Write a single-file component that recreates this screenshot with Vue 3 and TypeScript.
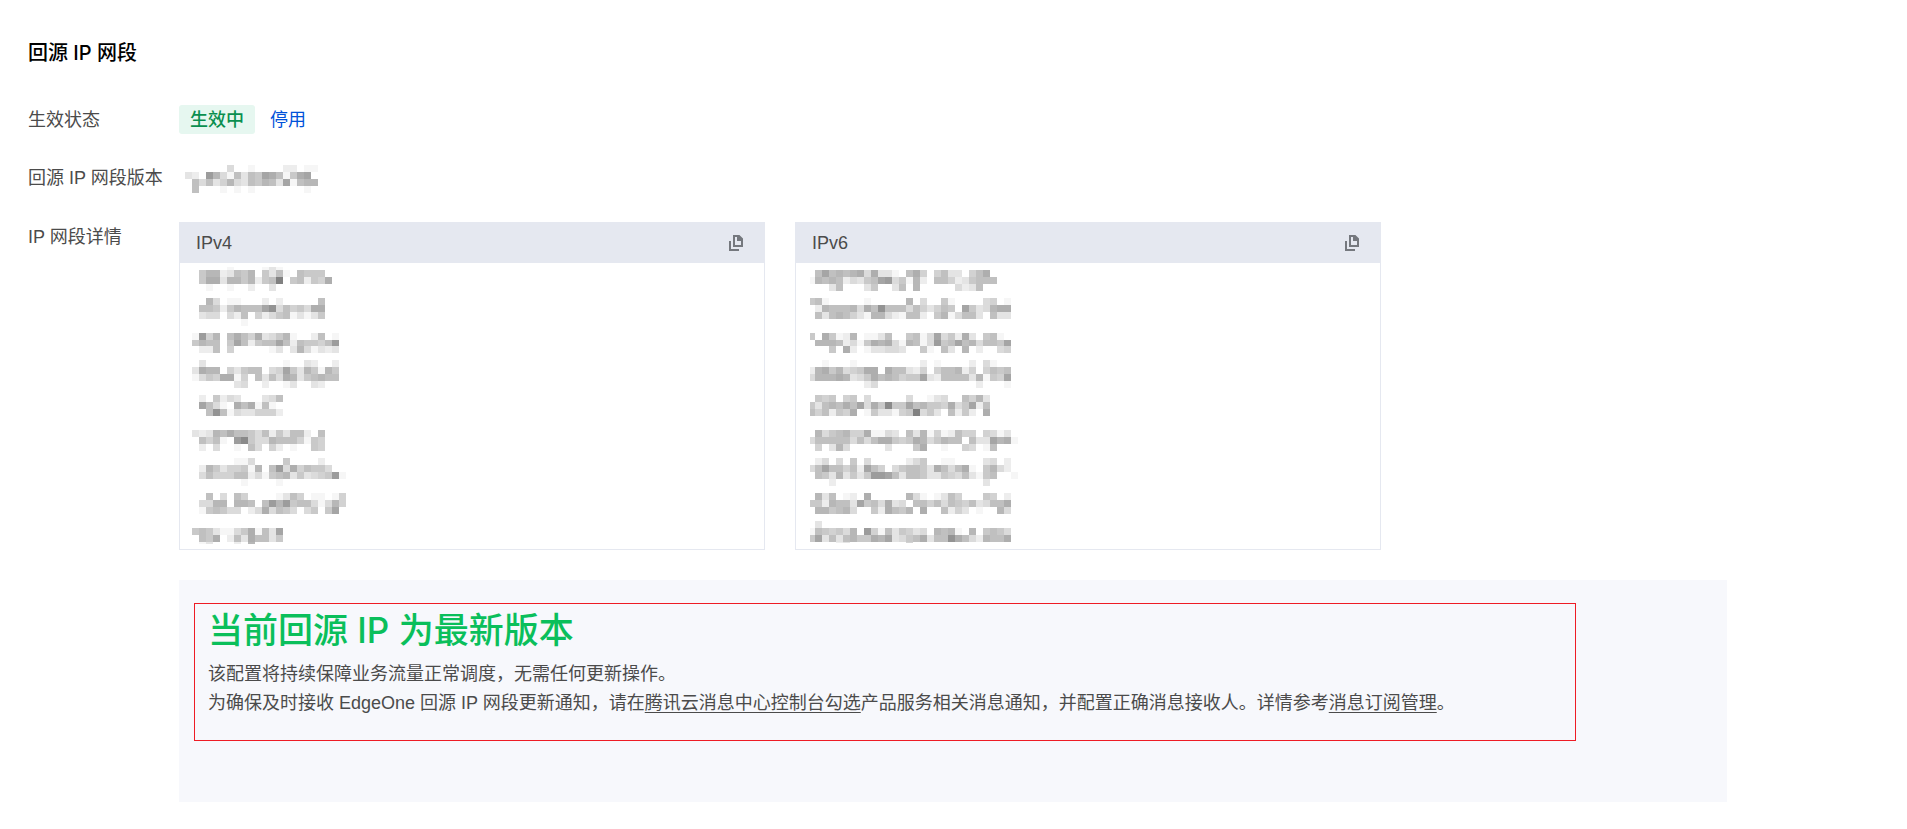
<script setup lang="ts">
interface MosaicRow {
  y: number
  h?: number
  cells: string
}
interface Block {
  x: number
  y: number
  h: number
  fill: string
}

const CELL = 7

/* Each character is one cell: 0 is empty, f is the darkest grey. */
function toBlocks(rows: MosaicRow[]): Block[] {
  return rows.flatMap((row) =>
    [...row.cells].flatMap((c, i) => {
      const level = parseInt(c, 16)
      if (!level) return []
      const g = 255 - level * 9
      return [{ x: i * CELL, y: row.y, h: row.h ?? CELL, fill: `rgb(${g},${g},${g})` }]
    })
  )
}

const version = toBlocks([
  { y: 0, cells: '0000004001000022011' },
  { y: 7, cells: '320b8417376a97169a0' },
  { y: 14, cells: '07473584376873a1788' },
  { y: 21, cells: '0700010101000000010' }
])

const ipv4 = toBlocks([
  { y: 3, h: 3, cells: '0000010000131' },
  { y: 6, cells: '06882376806371076660' },
  { y: 13, cells: '069938868267e0672659' },
  { y: 20, cells: '001001002003' },
  { y: 34, cells: '0084011000202000007' },
  { y: 41, cells: '0776268777ac4756499' },
  { y: 48, cells: '0344042705246713136' },
  { y: 55, cells: '00000001' },
  { y: 69, cells: '1b5807975934681002701' },
  { y: 76, h: 6, cells: '687706a72677a7276657b' },
  { y: 82, cells: '022705000001303841323' },
  { y: 96, cells: '030000000000010032002' },
  { y: 103, cells: '3988053677045a6386186' },
  { y: 110, cells: '146599150737498367877' },
  { y: 117, cells: '0000003400200130032' },
  { y: 131, cells: '0206243000347' },
  { y: 138, cells: '0a7410979171' },
  { y: 145, cells: '007c714335552' },
  { y: 166, cells: '3238797764726377207' },
  { y: 173, cells: '075710bd64487775165' },
  { y: 180, cells: '0204001074052010065' },
  { y: 194, cells: '0000001140000600002' },
  { y: 201, cells: '028635561807b4957664' },
  { y: 208, cells: '04755577241678363456b1' },
  { y: 215, cells: '0000000100001' },
  { y: 229, cells: '0070407500001375011015' },
  { y: 236, cells: '04488088707b8b67741485' },
  { y: 243, cells: '01676440249476404606a' },
  { y: 264, cells: '676311469173a' },
  { y: 271, cells: '0769027397736' },
  { y: 278, h: 2, cells: '013000208' }
])

const ipv6 = toBlocks([
  { y: 6, cells: '07a78789493310795057330579' },
  { y: 13, cells: '1878724367ab461820775236777' },
  { y: 20, cells: '0003700036003708000004237' },
  { y: 34, cells: '67100000100000804006100004501' },
  { y: 41, cells: '0287778497c77747535760a634899' },
  { y: 48, cells: '07378753188421772068147730733' },
  { y: 69, cells: '609612801137006714a4629306710' },
  { y: 76, h: 6, cells: '088872416989418714b67a784776a' },
  { y: 82, cells: '00060920133443006107308020045' },
  { y: 96, cells: '001000100000000020100002041' },
  { y: 103, cells: '28968456990977325057782505767' },
  { y: 110, cells: '4888983469787566a32777738165a' },
  { y: 117, cells: '00000000240000000000000020001' },
  { y: 131, cells: '06560560400000400134007583' },
  { y: 138, cells: '6378797a496d66a78665946a27' },
  { y: 145, cells: '757265901633156e4630726209' },
  { y: 166, cells: '08467855911430738151275505413' },
  { y: 173, cells: '47777747479965698468770733a891' },
  { y: 180, cells: '05038400000300069001005401700' },
  { y: 194, cells: '02404060400000246001100003402' },
  { y: 201, cells: '47a77572a75046776397479106842' },
  { y: 208, cells: '076383636bba737763365473167001' },
  { y: 215, cells: '0002000000000000000000000300' },
  { y: 229, cells: '08370120900000841013750006502' },
  { y: 236, cells: '6628773a674934077574765734779' },
  { y: 243, cells: '08867840062976809007253010084' },
  { y: 257, cells: '03' },
  { y: 264, cells: '17656480b51736534087810806764' },
  { y: 271, cells: '6a373786698a34679377c97428779' },
  { y: 278, h: 1, cells: '000023000000005' }
])

const panels = [
  { name: 'IPv4', blocks: ipv4, clip: 0 },
  { name: 'IPv6', blocks: ipv6, clip: 2 }
]
</script>

<template>
  <main class="page">
    <h1 class="title">回源 IP 网段</h1>

    <dl class="form">
      <dt>生效状态</dt>
      <dd class="status">
        <span class="tag">生效中</span>
        <button type="button" class="link-btn">停用</button>
      </dd>

      <dt>回源 IP 网段版本</dt>
      <dd class="version">
        <svg width="133" height="28" viewBox="0 0 133 28" shape-rendering="crispEdges" aria-hidden="true">
          <rect v-for="(b, i) in version" :key="i" :x="b.x" :y="b.y" width="7" :height="b.h" :fill="b.fill" />
        </svg>
      </dd>

      <dt>IP 网段详情</dt>
      <dd class="detail">
        <div class="panels">
          <section v-for="p in panels" :key="p.name" class="panel">
            <header class="panel-head">
              <h2>{{ p.name }}</h2>
              <button type="button" class="copy" :aria-label="p.name">
                <svg width="14" height="16" viewBox="0 0 14 16" fill="none" stroke="#75787e" stroke-width="2" aria-hidden="true">
                  <path d="M5 1h5l3 3v7H5z" />
                  <path d="M8 1h2l3 3v2H8z" fill="#75787e" stroke="none" />
                  <path d="M1 6v9h9" />
                </svg>
              </button>
            </header>
            <div class="panel-body">
              <svg width="214" height="285" :viewBox="`${p.clip} 0 214 285`" shape-rendering="crispEdges" aria-hidden="true">
                <rect v-for="(b, i) in p.blocks" :key="i" :x="b.x" :y="b.y" width="7" :height="b.h" :fill="b.fill" />
              </svg>
            </div>
          </section>
        </div>

        <section class="notice">
          <div class="notice-box">
            <h2 class="notice-title">当前回源 IP 为最新版本</h2>
            <p>该配置将持续保障业务流量正常调度，无需任何更新操作。</p>
            <p>
              为确保及时接收 EdgeOne 回源 IP 网段更新通知，请在<a href="#">腾讯云消息中心控制台勾选</a>产品服务相关消息通知，并配置正确消息接收人。详情参考<a href="#">消息订阅管理</a>。
            </p>
          </div>
        </section>
      </dd>
    </dl>
  </main>
</template>

<style>
body {
  background: #fff;
}
</style>

<style scoped>
.page {
  padding: 37px 180px 27px 28px;
  font-family: "Liberation Sans", "Noto Sans CJK SC", sans-serif;
  font-size: 18px;
  line-height: 29px;
  color: #4b4b4b;
}
.title {
  margin: 0;
  font-family: Inter, "Noto Sans CJK SC", sans-serif;
  font-size: 20px;
  line-height: 32px;
  font-weight: 500;
  color: #000;
}
.form {
  display: grid;
  grid-template-columns: 151px minmax(0, 1fr);
  row-gap: 28px;
  margin: 36px 0 0;
}
dt {
  padding-top: 1px;
  white-space: nowrap;
}
dd {
  margin: 0;
}
.status {
  display: flex;
  align-items: flex-start;
  gap: 15px;
}
.tag {
  padding: 1px 11px 0;
  border-radius: 3px;
  background: #e6f7f0;
  color: #0a8f4f;
  font-weight: 500;
  line-height: 28px;
}
.link-btn {
  padding: 1px 0 0;
  border: 0;
  background: none;
  font: inherit;
  color: #0052d9;
  cursor: pointer;
}
.version {
  padding: 2px 0 1px 6px;
}
.version svg,
.panel svg {
  display: block;
}
.panels {
  display: grid;
  grid-template-columns: 1fr 1fr;
  gap: 30px;
  max-width: 1202px;
}
.panel {
  border: 1px solid #e5e8f0;
  box-sizing: border-box;
}
.panel-head {
  display: flex;
  align-items: center;
  justify-content: space-between;
  height: 40px;
  padding: 0 21px 0 16px;
  background: #e5e8f0;
}
.panel-head h2 {
  margin: 0;
  font-size: 18px;
  font-weight: 400;
}
.copy {
  padding: 0;
  border: 0;
  background: none;
  cursor: pointer;
}
.panel-body {
  padding-top: 1px;
  padding-left: 12px;
}
.panel + .panel .panel-body {
  padding-left: 14px;
}
.notice {
  margin-top: 30px;
  padding: 23px 151px 61px 15px;
  background: #f7f8fc;
}
.notice-box {
  padding: 4px 13px 22px;
  border: 1px solid #ee1c25;
}
.notice-title {
  margin: 0 0 8px;
  font-family: Inter, "Noto Sans CJK SC", sans-serif;
  font-size: 35px;
  line-height: 44px;
  font-weight: 500;
  color: #0abf5b;
}
.notice p {
  margin: 0;
}
.notice a {
  color: inherit;
  text-decoration: underline;
  text-underline-offset: 3px;
  text-decoration-thickness: 1px;
}
</style>
